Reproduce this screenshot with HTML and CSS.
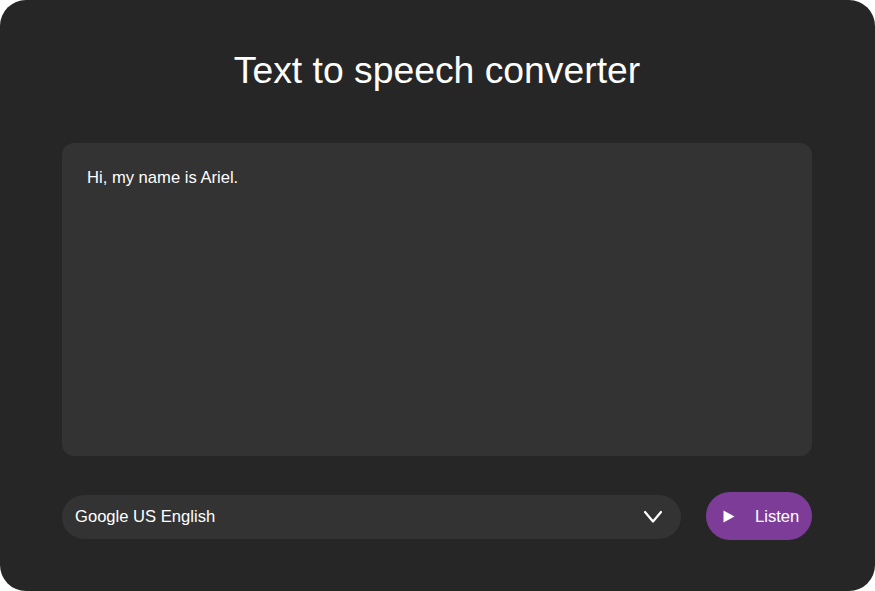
FILE: index.html
```html
<!DOCTYPE html>
<html lang="en">
<head>
<meta charset="utf-8">
<title>Text to speech converter</title>
<link rel="stylesheet" href="styles.css">
</head>
<body>
<main class="card">
  <h1 class="title">Text to speech converter</h1>
  <textarea class="text-input">Hi, my name is Ariel.</textarea>
  <div class="controls">
    <div class="voice-select">
      <span class="voice-label">Google US English</span>
      <svg class="chevron" width="20" height="14" viewBox="0 0 20 14" aria-hidden="true">
        <path d="M2 2 L10 11.5 L18 2" fill="none" stroke="#ffffff" stroke-width="2.2" stroke-linecap="round" stroke-linejoin="round"/>
      </svg>
    </div>
    <button class="listen-btn" type="button">
      <svg class="play" width="12" height="13" viewBox="0 0 12 13" aria-hidden="true">
        <path d="M0.5 0.5 L11.5 6.5 L0.5 12.5 Z" fill="#ffffff"/>
      </svg>
      <span>Listen</span>
    </button>
  </div>
</main>
</body>
</html>
```

FILE: styles.css
```css
html, body {
  margin: 0;
  padding: 0;
  background: #ffffff;
}

body {
  font-family: "Liberation Sans", Arial, sans-serif;
  color: #ffffff;
}

.card {
  box-sizing: border-box;
  width: 875px;
  height: 591px;
  border-radius: 26px;
  background: #262626;
  padding: 49px 63px 0 62px;
  display: flex;
  flex-direction: column;
}

.title {
  margin: 0;
  font-size: 37.3px;
  font-weight: 400;
  line-height: 42px;
  text-align: center;
  color: #ffffff;
}

.text-input {
  box-sizing: border-box;
  margin-top: 52px;
  width: 750px;
  height: 313px;
  padding: 26px 25px 25px 25px;
  border: none;
  outline: none;
  resize: none;
  border-radius: 12px;
  background: #333333;
  color: #ffffff;
  font-family: "Liberation Sans", Arial, sans-serif;
  font-size: 16.6px;
  line-height: 18px;
}

.controls {
  margin-top: 36px;
  display: flex;
  align-items: center;
  gap: 25px;
}

.voice-select {
  box-sizing: border-box;
  flex: 1;
  height: 44px;
  margin-top: 1px;
  border-radius: 22px;
  background: #333333;
  padding: 0 18px 0 13px;
  display: flex;
  align-items: center;
  justify-content: space-between;
  font-size: 16.6px;
}

.voice-label {
  padding-top: 1px;
}

.chevron {
  display: block;
}

.listen-btn {
  box-sizing: border-box;
  width: 106px;
  height: 48px;
  border: none;
  border-radius: 24px;
  background: #7d3c98;
  color: #ffffff;
  font-family: "Liberation Sans", Arial, sans-serif;
  font-size: 16.6px;
  padding: 0 0 0 17px;
  display: flex;
  align-items: center;
  gap: 20px;
  cursor: pointer;
}

.listen-btn span {
  padding-top: 1px;
}

.play {
  display: block;
}
```
